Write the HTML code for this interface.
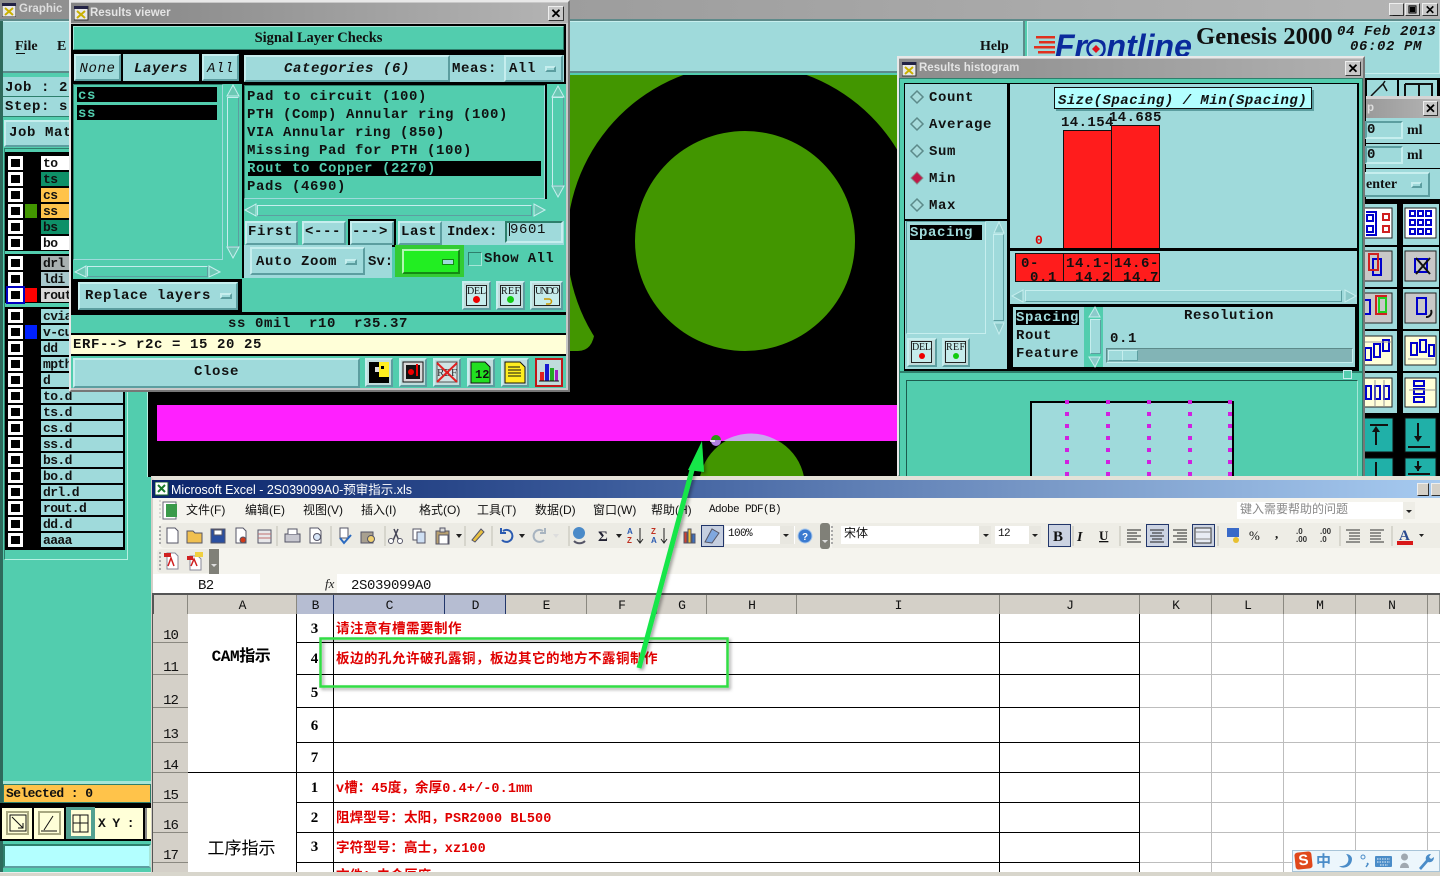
<!DOCTYPE html>
<html><head><meta charset="utf-8"><style>
html,body{margin:0;padding:0;width:1440px;height:876px;overflow:hidden;background:#52cdae}
div,span,svg{position:absolute;box-sizing:border-box;display:block}
.m{font:bold 14px/16px "Liberation Mono",monospace;letter-spacing:.6px;color:#111;white-space:pre}
.sm{font-size:13px;letter-spacing:-.6px}
.s{font:bold 14px/18px "Liberation Serif",serif;color:#111;white-space:pre}
.it{font-style:italic}
.c{text-align:center}
.b{background:#9fdadb;border:2px solid;border-color:#c6eeee #5c9ea0 #5c9ea0 #c6eeee}
.t{background:#52cdae;border:1px solid;border-color:#2e7f6c #a6e6d8 #a6e6d8 #2e7f6c}
.k{background:#000}
.l{background:#9fdadb}
.ti{font:bold 11.5px/16px "Liberation Sans",sans-serif;color:#e4e4e4;white-space:pre}
.x{background:#c8c8c8;border:1px solid;border-color:#eee #333 #333 #eee;font:bold 13px/12px "Liberation Sans",sans-serif;text-align:center;color:#000}
.r{left:5px;width:120px;height:16px;background:#000}
.r i{position:absolute;box-sizing:border-box;left:3px;top:1px;width:15px;height:14px;border:3px solid #fff;background:#000}
.r u{position:absolute;left:20px;top:1px;width:12px;height:14px}
.r b{position:absolute;box-sizing:border-box;left:36px;top:1px;width:82px;height:14px;background:#9fdadb;font:bold 13px/15px "Liberation Mono",monospace;letter-spacing:-.6px;padding-left:2px;color:#111;overflow:hidden}
.z{font:12px/16px "Liberation Mono","Noto Sans CJK SC",monospace;letter-spacing:-.6px;color:#111;white-space:pre}
.cj{font:12px/16px "Liberation Sans","Noto Sans CJK SC",sans-serif;color:#111;white-space:pre}
.rd{font:bold 13.5px/18px "Liberation Mono","Noto Sans CJK SC",sans-serif;color:#e00000;white-space:pre;letter-spacing:.1px}
.h{top:595px;height:19px;background:#d4d0c8;border-right:1px solid #8a8880;font:13px/21px "Liberation Mono",monospace;text-align:center;color:#111;letter-spacing:-1px}
.n{left:153px;width:35px;background:#d4d0c8;border-bottom:1px solid #8a8880;font:14px/16px "Liberation Mono",monospace;text-align:center;color:#111;letter-spacing:-1px}
.hl{left:297px;width:842px;height:1px;background:#000}
.num{left:297px;width:35px;font:bold 15px/18px "Liberation Serif",serif;text-align:center;color:#000}
.ic{background:#c0dcdc;border:2px solid;border-color:#c6eeee #5c9ea0 #5c9ea0 #c6eeee}
</style></head><body>

<!-- top title bar -->
<div style="left:0;top:0;width:1440px;height:19px;background:linear-gradient(90deg,#8e8e8e,#b4b4b4)"></div>
<div style="left:0;top:19px;width:1440px;height:2px;background:#5e8a8a"></div>
<div class="ti" style="left:19px;top:1px;color:#ddd">Graphic</div>
<div class="x" style="left:1389px;top:3px;width:15px;height:13px">_</div>
<div class="x" style="left:1405px;top:3px;width:15px;height:13px;font-size:10px">&#9635;</div>
<div class="x" style="left:1422px;top:3px;width:16px;height:13px;font-size:12px">&#10005;</div>
<svg style="left:2px;top:3px" width="14" height="14"><rect width="14" height="14" fill="#e8e8e8" stroke="#333"/><rect width="14" height="3" fill="#224"/><path d="M3 5l8 7M11 5l-8 7" stroke="#c9b000" stroke-width="2"/></svg>

<!-- top panels -->
<div class="l" style="left:2px;top:21px;width:1022px;height:52px;border:1px solid #c6eeee;border-bottom:2px solid #5c8a8a"></div>
<div class="s" style="left:15px;top:38px">File</div>
<div style="left:16px;top:53px;width:9px;height:1px;background:#111"></div>
<div class="s" style="left:57px;top:38px">E</div>
<div class="s" style="left:980px;top:38px">Help</div>
<div style="left:1023px;top:21px;width:2px;height:54px;background:#5c8a8a"></div>
<div class="l" style="left:1027px;top:21px;width:413px;height:53px;border:1px solid #c6eeee"></div>
<div style="left:1030px;top:28px;width:170px;height:28px;overflow:hidden">
  <svg style="left:4px;top:5px" width="22" height="23"><path d="M2 3h19v2.5h-19zM5 8h16v2.5h-16zM0 13h21v2.5h-21zM4 18h17v2.5h-17z" fill="#e0301e"/></svg>
  <div style="left:25px;top:0;font:italic bold 32px/36px 'Liberation Sans',sans-serif;color:#0a2a9c;white-space:pre">Frontline</div>
  <svg style="left:56px;top:11px" width="20" height="20"><circle cx="10" cy="10" r="8.5" fill="#9fdadb" stroke="#0a2a9c" stroke-width="2.5"/><path d="M10 6l4 4-4 4-4-4z" fill="#e0101e"/></svg>
</div>
<div style="left:1196px;top:21px;font:bold 24px/32px 'Liberation Serif',serif;color:#111;white-space:pre;transform:scaleX(1.03);transform-origin:0 0">Genesis 2000</div>
<div class="m it" style="left:1337px;top:24px">04 Feb 2013</div>
<div class="m it" style="left:1350px;top:39px">06:02 PM</div>

<!-- canvas -->
<svg style="left:148px;top:75px" width="760" height="402" viewBox="148 75 760 402">
 <rect x="148" y="75" width="760" height="402" fill="#000"/>
 <path d="M500 75H900V165H595V330Q593 351 578 351H500Z" fill="#429600"/>
 <circle cx="745" cy="242" r="178" fill="#000"/>
 <circle cx="745" cy="241" r="110" fill="#429600"/>
 <circle cx="752" cy="487" r="53" fill="#429600"/>
 <rect x="157" y="405" width="745" height="36" fill="#ff20ff"/>
 <path d="M723 441Q752 426 778 441Z" fill="#c8a8ee"/>
 <circle cx="716" cy="441" r="5" fill="#b080e0"/>
 <path d="M711 440a5 5 0 0 1 10 0z" fill="#2a9a10"/>
 <path d="M710 441h5" stroke="#fff" stroke-width="1.5"/>
</svg>
<div style="left:147px;top:75px;width:1px;height:402px;background:#b8f0e4"></div>

<!-- left column -->
<div style="left:0;top:21px;width:3px;height:855px;background:#2e6a5c"></div>
<div class="l" style="left:3px;top:77px;width:140px;height:20px;border-bottom:1px solid #2e7f6c"></div>
<div class="l" style="left:3px;top:97px;width:140px;height:20px;border-bottom:1px solid #2e7f6c"></div>
<div class="m" style="left:5px;top:80px">Job : 2</div>
<div class="m" style="left:5px;top:99px">Step: s</div>
<div class="b" style="left:4px;top:120px;width:140px;height:27px"></div>
<div class="m" style="left:9px;top:125px">Job Mat</div>
<div style="left:4px;top:148px;width:124px;height:412px;border:1px solid;border-color:#2e7f6c #b6f0e2 #b6f0e2 #2e7f6c"></div>
<div class="k" style="left:5px;top:152px;width:120px;height:398px"></div>
<div style="left:5px;top:250px;width:120px;height:4px;background:#52cdae"></div>
<div style="left:5px;top:303px;width:120px;height:4px;background:#52cdae"></div>
<div class="r" style="top:155px"><i></i><b style="background:#fff">to</b></div>
<div class="r" style="top:171px"><i></i><b style="background:#0e9068">ts</b></div>
<div class="r" style="top:187px"><i></i><b style="background:#ffc34a">cs</b></div>
<div class="r" style="top:203px"><i></i><u style="background:#429600"></u><b style="background:#ffc34a">ss</b></div>
<div class="r" style="top:219px"><i></i><b style="background:#0e9068">bs</b></div>
<div class="r" style="top:235px"><i></i><b style="background:#fff">bo</b></div>
<div class="r" style="top:255px"><i></i><b style="background:#a8b0b0">drl</b></div>
<div class="r" style="top:271px"><i></i><b style="background:#a8c8cc">ldi</b></div>
<div class="r" style="top:287px"><i style="outline:2px solid #0000c0"></i><u style="background:#ff0000"></u><b style="background:#d8d8d8">rout</b></div>
<div class="r" style="top:308px"><i></i><b>cvia</b></div>
<div class="r" style="top:324px"><i></i><u style="background:#0020ff"></u><b>v-cu</b></div>
<div class="r" style="top:340px"><i></i><b>dd</b></div>
<div class="r" style="top:356px"><i></i><b>mpth</b></div>
<div class="r" style="top:372px"><i></i><b>d</b></div>
<div class="r" style="top:388px"><i></i><b>to.d</b></div>
<div class="r" style="top:404px"><i></i><b>ts.d</b></div>
<div class="r" style="top:420px"><i></i><b>cs.d</b></div>
<div class="r" style="top:436px"><i></i><b>ss.d</b></div>
<div class="r" style="top:452px"><i></i><b>bs.d</b></div>
<div class="r" style="top:468px"><i></i><b>bo.d</b></div>
<div class="r" style="top:484px"><i></i><b>drl.d</b></div>
<div class="r" style="top:500px"><i></i><b>rout.d</b></div>
<div class="r" style="top:516px"><i></i><b>dd.d</b></div>
<div class="r" style="top:532px"><i></i><b>aaaa</b></div>
<div style="left:3px;top:781px;width:148px;height:3px;background:#a6e6d8"></div>
<div style="left:3px;top:784px;width:148px;height:19px;background:#ffc34a;border:1px solid #2e7f6c"></div>
<div class="m sm" style="left:6px;top:786px">Selected : 0</div>
<div class="k" style="left:0;top:803px;width:151px;height:38px"></div>
<div style="left:2px;top:808px;width:30px;height:31px;background:#ffffd8"></div>
<div style="left:34px;top:808px;width:30px;height:31px;background:#ffffd8"></div>
<div style="left:66px;top:807px;width:29px;height:32px;background:#52a090"></div>
<div style="left:71px;top:810px;width:20px;height:26px;background:#ffffd8"></div>
<div style="left:95px;top:808px;width:48px;height:31px;background:#ffffd8"></div>
<div style="left:145px;top:808px;width:6px;height:31px;background:#ffffd8;border-left:2px solid #888"></div>
<svg style="left:0;top:805px" width="100" height="35"><g fill="none" stroke="#111"><rect x="7" y="7" width="21" height="22" stroke="#a8a880" stroke-width="2"/><rect x="10" y="10" width="16" height="16"/><path d="M12 12l11 11M23 18v5h-5"/><rect x="39" y="7" width="21" height="22" stroke="#a8a880" stroke-width="2"/><path d="M41 26h16M44 25l9-14"/><rect x="73" y="10" width="15" height="17"/><path d="M80 10v17M73 18h15"/></g></svg>
<div class="m sm" style="left:98px;top:816px">X Y :</div>
<div style="left:3px;top:844px;width:148px;height:24px;background:#b3ffff;border:2px solid;border-color:#2e7f6c #a6e6d8 #5c9ea0 #2e7f6c"></div>

<!-- results viewer -->
<div style="left:69px;top:0;width:501px;height:392px;background:#c8c8c8;border:2px solid;border-color:#e8e8e8 #777 #777 #e8e8e8"></div>
<div style="left:71px;top:3px;width:497px;height:20px;background:linear-gradient(90deg,#848484,#b4b4b4)"></div>
<svg style="left:74px;top:6px" width="15" height="15"><rect width="14" height="14" fill="#e8e8e8" stroke="#333"/><rect width="14" height="3" fill="#224"/><path d="M3 5l8 7M11 5l-8 7" stroke="#c9b000" stroke-width="2"/></svg>
<div class="ti" style="left:90px;top:5px">Results viewer</div>
<div class="x" style="left:548px;top:6px;width:16px;height:15px;font-size:13px;line-height:13px">&#10005;</div>
<div class="k" style="left:71px;top:24px;width:495px;height:364px"></div>
<div class="t" style="left:73px;top:26px;width:491px;height:24px;border-color:#a6e6d8 #2e7f6c #2e7f6c #a6e6d8"></div>
<div class="s c" style="left:73px;top:29px;width:491px;font-size:14.5px">Signal Layer Checks</div>
<div class="b" style="left:74px;top:54px;width:47px;height:27px"></div>
<div class="m it c" style="left:74px;top:61px;width:47px;font-weight:normal">None</div>
<div class="l" style="left:123px;top:54px;width:76px;height:27px"></div>
<div class="m it c" style="left:123px;top:61px;width:76px">Layers</div>
<div class="b" style="left:202px;top:54px;width:37px;height:27px"></div>
<div class="m it c" style="left:202px;top:61px;width:37px;font-weight:normal">All</div>
<div class="b" style="left:244px;top:55px;width:206px;height:27px"></div>
<div class="m it c" style="left:244px;top:61px;width:206px">Categories (6)</div>
<div class="l" style="left:450px;top:55px;width:114px;height:27px"></div>
<div class="m" style="left:452px;top:61px">Meas:</div>
<div class="b" style="left:504px;top:55px;width:59px;height:27px"></div>
<div class="m" style="left:509px;top:61px">All</div>
<div class="b" style="left:545px;top:66px;width:11px;height:6px"></div>

<div style="left:73px;top:84px;width:165px;height:192px;background:#52cdae"></div>
<div style="left:73px;top:84px;width:150px;height:176px;background:#52cdae;border:1px solid;border-color:#2e7f6c #9fdadb #9fdadb #2e7f6c"></div>
<div class="k" style="left:77px;top:87px;width:140px;height:15px"></div>
<div class="k" style="left:77px;top:105px;width:140px;height:15px"></div>
<div class="m" style="left:78px;top:88px;color:#52cdae">cs</div>
<div class="m" style="left:78px;top:106px;color:#52cdae">ss</div>

<div class="t" style="left:244px;top:85px;width:301px;height:114px;border-color:#2e7f6c #9fdadb #9fdadb #2e7f6c"></div>
<div class="m" style="left:247px;top:89px">Pad to circuit (100)</div>
<div class="m" style="left:247px;top:107px">PTH (Comp) Annular ring (100)</div>
<div class="m" style="left:247px;top:125px">VIA Annular ring (850)</div>
<div class="m" style="left:247px;top:143px">Missing Pad for PTH (100)</div>
<div class="k" style="left:248px;top:161px;width:293px;height:15px"></div>
<div class="m" style="left:247px;top:161px;color:#52cdae">Rout to Copper (2270)</div>
<div class="m" style="left:247px;top:179px">Pads (4690)</div>

<div style="left:244px;top:199px;width:322px;height:20px;background:#52cdae"></div>
<div style="left:547px;top:84px;width:19px;height:116px;background:#52cdae"></div>
<div style="left:224px;top:84px;width:18px;height:178px;background:#52cdae"></div>
<div style="left:73px;top:261px;width:169px;height:18px;background:#52cdae"></div>
<!-- scrollbars -->
<div class="b" style="left:227px;top:97px;width:12px;height:150px;background:#52cdae;border-width:1px"></div>
<div class="b" style="left:552px;top:97px;width:12px;height:89px;background:#52cdae;border-width:1px"></div>
<div class="b" style="left:87px;top:266px;width:121px;height:11px;background:#52cdae;border-width:1px"></div>
<div class="b" style="left:257px;top:205px;width:275px;height:11px;background:#52cdae;border-width:1px"></div>
<svg style="left:70px;top:80px" width="500" height="200" viewBox="70 80 500 200"><g fill="#6cc8b4" stroke="#c6eeee"><path d="M233 85l6 11h-12zM233 258l6-11h-12zM558 86l6 11h-12zM558 197l6-11h-12zM75 272l11-6v11zM220 272l-11-6v11zM245 210l11-6v12zM545 210l-11-6v12z"/></g></svg>

<div class="k" style="left:73px;top:279px;width:168px;height:35px"></div>
<div class="b" style="left:78px;top:282px;width:160px;height:28px"></div>
<div class="m" style="left:85px;top:288px">Replace layers</div>
<div class="b" style="left:220px;top:293px;width:12px;height:6px"></div>

<div style="left:244px;top:218px;width:322px;height:96px;background:#52cdae"></div>
<div class="b" style="left:245px;top:221px;width:53px;height:24px"></div>
<div class="m" style="left:248px;top:224px">First</div>
<div class="b" style="left:302px;top:221px;width:44px;height:24px"></div>
<div class="m" style="left:305px;top:224px">&lt;---</div>
<div class="k" style="left:348px;top:219px;width:48px;height:28px"></div>
<div class="b" style="left:350px;top:221px;width:44px;height:24px"></div>
<div class="m" style="left:352px;top:224px">---&gt;</div>
<div class="b" style="left:398px;top:221px;width:44px;height:24px"></div>
<div class="m" style="left:401px;top:224px">Last</div>
<div class="l" style="left:442px;top:221px;width:122px;height:24px"></div>
<div class="m" style="left:447px;top:224px;letter-spacing:0">Index:</div>
<div class="l" style="left:505px;top:221px;width:58px;height:22px;border:2px solid;border-color:#2e7f6c #c6eeee #c6eeee #2e7f6c"></div>
<div class="m" style="left:510px;top:222px;font-weight:normal">9601</div>
<div style="left:509px;top:223px;width:1px;height:13px;background:#111"></div>
<div class="l" style="left:244px;top:245px;width:148px;height:33px"></div>
<div class="b" style="left:250px;top:247px;width:115px;height:28px"></div>
<div class="m" style="left:256px;top:254px">Auto Zoom</div>
<div class="b" style="left:345px;top:259px;width:12px;height:6px"></div>
<div class="m" style="left:368px;top:254px;letter-spacing:0">Sv:</div>
<div style="left:395px;top:245px;width:69px;height:32px;background:#33cc33"></div>
<div style="left:402px;top:249px;width:58px;height:25px;background:#22ee22;border:2px solid;border-color:#b0f8b0 #148a14 #148a14 #b0f8b0"></div>
<div style="left:442px;top:259px;width:12px;height:6px;background:#9fdadb;border:1px solid #148a14"></div>
<div style="left:468px;top:252px;width:14px;height:14px;background:#52cdae;border:1px solid;border-color:#2e7f6c #a6e6d8 #a6e6d8 #2e7f6c"></div>
<div class="m" style="left:484px;top:251px;letter-spacing:.35px">Show All</div>
<div style="left:242px;top:278px;width:324px;height:36px;background:#52cdae"></div>
<div class="ic" style="left:462px;top:281px;width:29px;height:29px"></div>
<div class="ic" style="left:496px;top:281px;width:29px;height:29px"></div>
<div class="ic" style="left:530px;top:281px;width:33px;height:29px"></div>
<svg style="left:462px;top:281px" width="104" height="30" font-family="Liberation Serif" font-size="10" fill="#111">
 <rect x="4.500" y="4.500" width="20" height="20" fill="#c6ecec" stroke="#222"/><text x="5" y="13" textLength="19">DEL</text><circle cx="14.500" cy="18.500" r="3.500" fill="#e00"/>
 <rect x="38.500" y="4.500" width="20" height="20" fill="#c6ecec" stroke="#222"/><text x="39" y="13" textLength="19">REF</text><circle cx="48.500" cy="18.500" r="3.500" fill="#1c1"/>
 <rect x="72.500" y="4.500" width="25" height="20" fill="#c6ecec" stroke="#222"/><text x="73" y="13" textLength="24">UNDO</text><path d="M82 18h5a2.500 2.500 0 0 1 0 5h-3" fill="none" stroke="#c90" stroke-width="1.500"/>
</svg>
<div class="k" style="left:71px;top:312px;width:495px;height:3px"></div>
<div style="left:71px;top:315px;width:495px;height:19px;background:#52cdae"></div>
<div class="m" style="left:228px;top:316px">ss 0mil  r10  r35.37</div>
<div class="k" style="left:71px;top:333px;width:495px;height:2px"></div>
<div style="left:71px;top:335px;width:495px;height:19px;background:#ffffd8"></div>
<div class="m" style="left:73px;top:337px">ERF--&gt; r2c = 15 20 25</div>
<div class="k" style="left:71px;top:354px;width:495px;height:2px"></div>
<div style="left:71px;top:356px;width:495px;height:32px;background:#52cdae"></div>
<div class="b" style="left:73px;top:358px;width:287px;height:30px"></div>
<div class="m c" style="left:73px;top:364px;width:287px">Close</div>
<div class="ic" style="left:365px;top:358px;width:28px;height:29px"></div>
<div class="ic" style="left:399px;top:358px;width:28px;height:29px"></div>
<div class="ic" style="left:433px;top:358px;width:28px;height:29px"></div>
<div class="ic" style="left:467px;top:358px;width:28px;height:29px"></div>
<div class="ic" style="left:501px;top:358px;width:28px;height:29px"></div>
<div style="left:535px;top:358px;width:28px;height:29px;background:#c0dcdc;border:2px solid #c01818"></div>
<svg style="left:365px;top:358px" width="200" height="30" viewBox="365 358 200 30">
 <rect x="369" y="362" width="20" height="21" fill="#000"/><rect x="379" y="362" width="10" height="15" fill="#ffee20"/><rect x="375" y="367" width="4" height="5" fill="#ddd"/><rect x="381" y="366" width="3" height="3" fill="#000"/>
 <rect x="403" y="362" width="20" height="20" fill="#d8d8d8" stroke="#111"/><rect x="406" y="365" width="14" height="14" fill="#111"/><circle cx="411" cy="372" r="3" fill="#e00"/><path d="M417 364v12" stroke="#e00" stroke-width="2"/>
 <rect x="437" y="362" width="20" height="20" fill="#d0e4e4" stroke="#555"/><text x="437" y="376" font-family="Liberation Serif" font-size="11" textLength="20" fill="#333">REF</text><path d="M437 363l20 19M457 363l-20 19" stroke="#e02020" stroke-width="2"/>
 <path d="M471 362h14l5 5v16h-19z" fill="#22e020" stroke="#111"/><text x="475" y="378" font-family="Liberation Mono" font-weight="bold" font-size="12" fill="#111">12</text>
 <path d="M505 362h15l5 5v16h-20z" fill="#ffee20" stroke="#111"/><path d="M508 367h12M508 370h13M508 373h13M508 376h13" stroke="#111"/>
 <rect x="538" y="361" width="22" height="23" fill="#c0dcdc"/><rect x="540" y="372" width="4" height="9" fill="#e02020"/><rect x="545" y="364" width="4" height="17" fill="#1818d0"/><rect x="550" y="368" width="4" height="13" fill="#22aa22"/><rect x="555" y="370" width="3" height="11" fill="#a020c0"/><path d="M539 381h20" stroke="#111"/>
</svg>

<!-- right stub -->
<div class="l" style="left:1365px;top:74px;width:75px;height:402px"></div>
<div class="k" style="left:1364px;top:78px;width:76px;height:398px"></div>
<div class="l" style="left:1367px;top:80px;width:30px;height:16px"></div>
<div class="l" style="left:1399px;top:80px;width:38px;height:16px"></div>
<svg style="left:1367px;top:80px" width="72" height="16" fill="none" stroke="#111"><path d="M4 16l12-12 4 7M16 4l2-3" stroke-width="1.500"/><path d="M38 4h27v12M38 4v12M52 4v12" stroke-width="2"/></svg>
<div style="left:1366px;top:96px;width:74px;height:3px;background:#d4d4d4"></div>
<div style="left:1366px;top:99px;width:74px;height:19px;background:linear-gradient(90deg,#9a9a9a,#b4b4b4)"></div>
<div class="x" style="left:1423px;top:101px;width:15px;height:15px;line-height:13px">&#10005;</div>
<div class="ti" style="left:1367px;top:100px;color:#ddd">p</div>
<div style="left:1366px;top:118px;width:74px;height:88px;background:#9fdadb"></div>
<div class="k" style="left:1366px;top:143px;width:74px;height:1px"></div>
<div class="k" style="left:1366px;top:168px;width:74px;height:1px"></div>
<div class="k" style="left:1366px;top:199px;width:74px;height:2px"></div>
<div style="left:1365px;top:121px;width:38px;height:18px;border:2px solid;border-color:#5c9ea0 #c6eeee #c6eeee #5c9ea0"></div>
<div style="left:1365px;top:146px;width:38px;height:18px;border:2px solid;border-color:#5c9ea0 #c6eeee #c6eeee #5c9ea0"></div>
<div class="m" style="left:1367px;top:122px">0</div>
<div class="m" style="left:1367px;top:147px">0</div>
<div class="s" style="left:1407px;top:122px">ml</div>
<div class="s" style="left:1407px;top:147px">ml</div>
<div class="b" style="left:1362px;top:172px;width:68px;height:25px"></div>
<div class="s" style="left:1366px;top:176px">enter</div>
<div class="b" style="left:1411px;top:182px;width:11px;height:6px"></div>
<div class="k" style="left:1364px;top:201px;width:76px;height:275px"></div>
<svg style="left:1365px;top:204px" width="75" height="272" viewBox="1365 204 75 272">
 <g fill="#9fdadb"><rect x="1361" y="204" width="36" height="41"/><rect x="1403" y="204" width="36" height="41"/><rect x="1361" y="247" width="36" height="40"/><rect x="1403" y="247" width="36" height="40"/><rect x="1361" y="289" width="36" height="40"/><rect x="1403" y="289" width="36" height="40"/><rect x="1361" y="331" width="36" height="40"/><rect x="1403" y="331" width="36" height="40"/><rect x="1361" y="373" width="36" height="40"/><rect x="1403" y="373" width="36" height="40"/></g>
 <g fill="#fff" stroke="#222"><rect x="1361" y="208" width="31" height="30"/><rect x="1405" y="208" width="31" height="30"/></g>
 <g fill="#c8c8c8" stroke="#222"><rect x="1361" y="251" width="31" height="30"/><rect x="1405" y="251" width="31" height="30"/><rect x="1361" y="293" width="31" height="30"/><rect x="1405" y="293" width="31" height="30"/></g>
 <g fill="#ffffd8" stroke="#222"><rect x="1361" y="336" width="31" height="29"/><rect x="1405" y="336" width="31" height="29"/><rect x="1361" y="378" width="31" height="29"/><rect x="1405" y="378" width="31" height="29"/></g>
 <g fill="none" stroke="#00c" stroke-width="2">
  <rect x="1367" y="215" width="6" height="6"/><rect x="1367" y="226" width="6" height="6"/><path d="M1366 212h10v23h-10"/>
  <rect x="1410" y="211" width="5" height="5"/><rect x="1418" y="211" width="5" height="5"/><rect x="1426" y="211" width="5" height="5"/><rect x="1410" y="220" width="5" height="5"/><rect x="1418" y="220" width="5" height="5"/><rect x="1426" y="220" width="5" height="5"/><rect x="1410" y="229" width="5" height="5"/><rect x="1418" y="229" width="5" height="5"/><rect x="1426" y="229" width="5" height="5"/>
  <rect x="1373" y="259" width="8" height="16"/><rect x="1415" y="259" width="12" height="13"/><path d="M1416 258l14 16M1430 258l-14 16" stroke="#111"/>
  <rect x="1417" y="298" width="9" height="16"/>
  <rect x="1364" y="300" width="6" height="14"/>
  <rect x="1365" y="348" width="6" height="12"/><rect x="1374" y="344" width="6" height="13"/><rect x="1383" y="340" width="6" height="11"/>
  <rect x="1411" y="343" width="6" height="12"/><rect x="1420" y="340" width="6" height="12"/><rect x="1429" y="345" width="5" height="11"/>
  <rect x="1366" y="386" width="5" height="13"/><rect x="1375" y="386" width="5" height="13"/><rect x="1384" y="386" width="5" height="13"/>
  <rect x="1414" y="381" width="10" height="5"/><rect x="1414" y="389" width="10" height="5"/><rect x="1414" y="397" width="10" height="5"/>
 </g>
 <g fill="none" stroke-width="2"><rect x="1369" y="254" width="9" height="16" stroke="#d02020"/><rect x="1376" y="296" width="10" height="18" stroke="#d02020"/><rect x="1379" y="298" width="7" height="14" stroke="#22cc22"/><path d="M1431 310a5 5 0 0 1-5 7" stroke="#111"/></g>
 <g fill="none" stroke="#d02020" stroke-width="2"><rect x="1383" y="214" width="6" height="6"/><rect x="1383" y="226" width="6" height="6"/></g>
 <path d="M1364 342h27M1408 359h26M1375 380v26M1384 380v26M1409 390h26" stroke="#999"/>
 <g fill="#20b0a8" stroke="#111"><rect x="1362" y="418" width="31" height="34"/><rect x="1405" y="418" width="31" height="34"/><rect x="1362" y="458" width="31" height="20"/><rect x="1405" y="458" width="31" height="20"/></g>
 <path d="M1376 445v-17M1370 425h18M1418 423v17M1408 447h22M1418 461v10M1408 474h22M1376 462v14" stroke="#111" stroke-width="2"/>
 <path d="M1372 432l4-6 4 6zM1414 436l4 6 4-6zM1414 466l4 5 4-5z" fill="#111"/>
</svg>

<!-- histogram window -->
<div style="left:897px;top:56px;width:468px;height:421px;background:#c8c8c8;border:2px solid;border-color:#e8e8e8 #777 #777 #e8e8e8"></div>
<div style="left:899px;top:59px;width:464px;height:19px;background:linear-gradient(90deg,#8c8c8c,#b0b0b0)"></div>
<svg style="left:902px;top:62px" width="15" height="15"><rect width="14" height="14" fill="#e8e8e8" stroke="#333"/><rect width="14" height="3" fill="#224"/><path d="M3 5l8 7M11 5l-8 7" stroke="#c9b000" stroke-width="2"/></svg>
<div class="ti" style="left:919px;top:60px">Results histogram</div>
<div class="x" style="left:1345px;top:61px;width:16px;height:15px;line-height:13px">&#10005;</div>
<div style="left:899px;top:78px;width:464px;height:399px;background:#52cdae;border:1px solid #2e7f6c"></div>
<div class="k" style="left:904px;top:83px;width:104px;height:288px"></div>
<div class="l" style="left:905px;top:84px;width:102px;height:135px"></div>
<div class="l" style="left:905px;top:221px;width:102px;height:148px"></div>
<svg style="left:905px;top:84px" width="30" height="135"><g fill="#a8dcdc" stroke="#5c8a8a" stroke-width="1.500"><path d="M12 7l6 6-6 6-6-6zM12 34l6 6-6 6-6-6zM12 61l6 6-6 6-6-6zM12 115l6 6-6 6-6-6z"/></g><path d="M12 88l6 6-6 6-6-6z" fill="#c01848" stroke="#888"/></svg>
<div class="m" style="left:929px;top:90px">Count</div>
<div class="m" style="left:929px;top:117px">Average</div>
<div class="m" style="left:929px;top:144px">Sum</div>
<div class="m" style="left:929px;top:171px">Min</div>
<div class="m" style="left:929px;top:198px">Max</div>
<div style="left:906px;top:221px;width:80px;height:113px;border:1px solid;border-color:#5c9ea0 #c6eeee #c6eeee #5c9ea0"></div>
<div class="k" style="left:910px;top:225px;width:72px;height:15px"></div>
<div class="m" style="left:910px;top:225px;color:#9fdadb">Spacing</div>
<div class="b" style="left:993px;top:234px;width:11px;height:87px;border-width:1px"></div>
<svg style="left:990px;top:220px" width="18" height="116"><g fill="#8ccaca" stroke="#c6eeee"><path d="M9 2l5 11h-10zM9 114l5-11h-10z"/></g></svg>
<div class="ic" style="left:907px;top:338px;width:30px;height:29px"></div>
<div class="ic" style="left:942px;top:338px;width:28px;height:29px"></div>
<svg style="left:907px;top:338px" width="70" height="30" font-family="Liberation Serif" font-size="10" fill="#111">
 <rect x="4.500" y="3.500" width="20" height="21" fill="#c6ecec" stroke="#222"/><text x="5" y="12" textLength="19">DEL</text><circle cx="15" cy="18" r="3" fill="#e00"/>
 <rect x="38.500" y="3.500" width="20" height="21" fill="#c6ecec" stroke="#222"/><text x="39" y="12" textLength="19">REF</text><circle cx="49" cy="18" r="3" fill="#1c1"/>
</svg>
<div class="k" style="left:1008px;top:83px;width:351px;height:288px"></div>
<div class="l" style="left:1010px;top:84px;width:347px;height:164px"></div>
<div style="left:1056px;top:90px;width:258px;height:21px;background:#5c9ea0"></div>
<div style="left:1054px;top:87px;width:258px;height:22px;background:#b3ffff;border:1px solid #111"></div>
<div class="m it" style="left:1058px;top:93px;letter-spacing:.5px">Size(Spacing) / Min(Spacing)</div>
<div class="m" style="left:1061px;top:115px;letter-spacing:.4px">14.154</div>
<div style="left:1063px;top:130px;width:49px;height:119px;background:#ff1c1c;border:1px solid #111"></div>
<div style="left:1111px;top:125px;width:49px;height:124px;background:#ff1c1c;border:1px solid #111"></div>
<div class="m" style="left:1109px;top:110px;letter-spacing:.4px">14.685</div>
<div class="m sm" style="left:1035px;top:233px;color:#d00">0</div>
<div class="k" style="left:1010px;top:248px;width:347px;height:3px"></div>
<div class="l" style="left:1010px;top:251px;width:347px;height:53px"></div>
<div style="left:1015px;top:253px;width:49px;height:29px;background:#ff1c1c;border:1px solid #111;overflow:hidden"><div class="m" style="left:5px;top:2px">0-</div><div class="m" style="left:14px;top:16px">0.1</div></div>
<div style="left:1063px;top:253px;width:49px;height:29px;background:#ff1c1c;border:1px solid #111;overflow:hidden"><div class="m" style="left:2px;top:2px">14.1-</div><div class="m" style="left:11px;top:16px">14.2</div></div>
<div style="left:1111px;top:253px;width:49px;height:29px;background:#ff1c1c;border:1px solid #111;overflow:hidden"><div class="m" style="left:2px;top:2px">14.6-</div><div class="m" style="left:11px;top:16px">14.7</div></div>
<div class="b" style="left:1025px;top:290px;width:317px;height:12px;border-width:1px"></div>
<svg style="left:1010px;top:288px" width="350" height="16"><g fill="#8ccaca" stroke="#c6eeee"><path d="M2 8l11-6v12zM346 8l-11-6v12z"/></g></svg>
<div class="k" style="left:1010px;top:304px;width:348px;height:66px"></div>
<div class="l" style="left:1013px;top:307px;width:342px;height:60px"></div>
<div class="k" style="left:1016px;top:310px;width:63px;height:15px"></div>
<div class="m" style="left:1016px;top:310px;color:#9fdadb">Spacing</div>
<div class="m" style="left:1016px;top:328px">Rout</div>
<div class="m" style="left:1016px;top:346px">Feature</div>
<div style="left:1084px;top:307px;width:19px;height:60px;background:#52cdae"></div>
<div class="b" style="left:1090px;top:319px;width:11px;height:35px;border-width:1px"></div>
<svg style="left:1085px;top:305px" width="20" height="64"><g fill="#8ccaca" stroke="#c6eeee"><path d="M10 2l5 10h-11zM10 62l5-10h-11z"/></g></svg>
<div class="m c" style="left:1103px;top:308px;width:252px">Resolution</div>
<div class="m" style="left:1110px;top:331px">0.1</div>
<div style="left:1106px;top:348px;width:247px;height:15px;background:#82b4b6;border:1px solid;border-color:#5c8a8a #c6eeee #c6eeee #5c8a8a"></div>
<div class="b" style="left:1108px;top:350px;width:15px;height:11px;border-width:1px"></div>
<div class="b" style="left:1122px;top:350px;width:16px;height:11px;border-width:1px"></div>
<div style="left:899px;top:371px;width:464px;height:2px;background:#2e7f6c"></div>
<div style="left:1343px;top:370px;width:9px;height:9px;background:#52cdae;border:1px solid #c6eeee"></div>
<div style="left:906px;top:380px;width:452px;height:97px;border:1px solid;border-color:#1c5c4e #a6e6d8 #a6e6d8 #1c5c4e"></div>
<div class="l" style="left:1030px;top:401px;width:204px;height:76px;border:2px solid #000;border-bottom:0"></div>
<svg style="left:1060px;top:398px" width="180" height="79"><g fill="#d020e0"><path d="M5 2h4v4h-4zM5 14h4v4h-4zM5 26h4v4h-4zM5 38h4v4h-4zM5 50h4v4h-4zM5 62h4v4h-4zM5 74h4v4h-4zM46 2h4v4h-4zM46 14h4v4h-4zM46 26h4v4h-4zM46 38h4v4h-4zM46 50h4v4h-4zM46 62h4v4h-4zM46 74h4v4h-4zM87 2h4v4h-4zM87 14h4v4h-4zM87 26h4v4h-4zM87 38h4v4h-4zM87 50h4v4h-4zM87 62h4v4h-4zM87 74h4v4h-4zM128 2h4v4h-4zM128 14h4v4h-4zM128 26h4v4h-4zM128 38h4v4h-4zM128 50h4v4h-4zM128 62h4v4h-4zM128 74h4v4h-4zM168 2h4v4h-4zM168 14h4v4h-4zM168 26h4v4h-4zM168 38h4v4h-4zM168 50h4v4h-4zM168 62h4v4h-4zM168 74h4v4h-4z"/></g></svg>

<!-- excel window -->
<div style="left:151px;top:476px;width:1289px;height:400px;background:#ece9d8;border-left:3px solid #d4d0c8;border-top:4px solid #e4e2d8"></div>
<div style="left:152px;top:480px;width:1288px;height:18px;background:linear-gradient(90deg,#0a246a,#3a5a9a 35%,#7a9ac8 70%,#a6caf0)"></div>
<svg style="left:155px;top:482px" width="14" height="14"><rect width="13" height="13" fill="#fff" stroke="#1a6a2a"/><path d="M3 3l7 7M10 3l-7 7" stroke="#1a7a2a" stroke-width="2"/></svg>
<div class="cj" style="left:171px;top:482px;color:#fff;font-size:12.5px">Microsoft Excel - 2S039099A0-预审指示.xls</div>
<div class="x" style="left:1417px;top:483px;width:12px;height:13px;background:#d4d0c8">_</div>
<div class="x" style="left:1431px;top:483px;width:12px;height:13px;background:#d4d0c8"></div>
<div style="left:153px;top:498px;width:1287px;height:76px;background:#f5f4ee"></div>
<div style="left:160px;top:523px;width:669px;height:25px;background:#ecebe4;border-radius:4px"></div>
<div style="left:832px;top:523px;width:608px;height:25px;background:#eeede6"></div>
<div style="left:157px;top:549px;width:62px;height:24px;background:#ecebe4;border-radius:4px"></div>
<div style="left:820px;top:523px;width:10px;height:26px;background:#808078;border-radius:3px"></div>
<div style="left:209px;top:549px;width:10px;height:25px;background:#808078"></div>
<div class="cj" style="left:186px;top:502px">文件(F)</div>
<div class="cj" style="left:245px;top:502px">编辑(E)</div>
<div class="cj" style="left:303px;top:502px">视图(V)</div>
<div class="cj" style="left:361px;top:502px">插入(I)</div>
<div class="cj" style="left:419px;top:502px">格式(O)</div>
<div class="cj" style="left:477px;top:502px">工具(T)</div>
<div class="cj" style="left:535px;top:502px">数据(D)</div>
<div class="cj" style="left:593px;top:502px">窗口(W)</div>
<div class="cj" style="left:651px;top:502px">帮助(H)</div>
<div class="z" style="left:709px;top:502px;font-size:11px">Adobe PDF(B)</div>
<div style="left:1237px;top:502px;width:178px;height:17px;background:#fff"></div>
<div class="cj" style="left:1240px;top:501px;color:#888">键入需要帮助的问题</div>
<div style="left:1403px;top:502px;width:12px;height:17px;background:#eeede6"></div>
<!-- excel toolbars -->
<div style="left:725px;top:526px;width:70px;height:18px;background:#fff"></div>
<div class="z" style="left:728px;top:526px;font-size:11px">100%</div>
<div style="left:780px;top:526px;width:14px;height:18px;background:#e8e7e0"></div>
<div style="left:841px;top:526px;width:150px;height:18px;background:#fff"></div>
<div class="cj" style="left:844px;top:525px">宋体</div>
<div style="left:979px;top:526px;width:12px;height:18px;background:#e8e7e0"></div>
<div style="left:995px;top:526px;width:46px;height:18px;background:#fff"></div>
<div class="z" style="left:998px;top:526px;font-size:11px">12</div>
<div style="left:1029px;top:526px;width:12px;height:18px;background:#e8e7e0"></div>
<div style="left:701px;top:525px;width:23px;height:22px;background:#c6cfe0;border:1px solid #22366a"></div>
<div style="left:1048px;top:524px;width:23px;height:23px;background:#ccd3e2;border:1px solid #22366a"></div>
<div style="left:1146px;top:524px;width:23px;height:23px;background:#ccd3e2;border:1px solid #22366a"></div>
<div style="left:1192px;top:524px;width:23px;height:23px;background:#ccd3e2;border:1px solid #22366a"></div>
<svg style="left:153px;top:498px" width="1287" height="76" viewBox="153 498 1287 76">
 <rect x="163" y="502" width="13" height="17" fill="#fff" stroke="#667"/><path d="M160 500v20" stroke="#bbb" stroke-dasharray="2 2"/><rect x="166" y="504" width="11" height="13" fill="#3a9a4a"/>
 <path d="M160 526v20M832 526v20M160 552v18" stroke="#aaa" stroke-width="2" stroke-dasharray="2 2"/>
 <g stroke-width="1" stroke="#556">
 <path d="M167 528h8l3 3v12h-11z" fill="#fff"/>
 <path d="M187 531h6l2 2h7v10h-15z" fill="#f0c050"/>
 <rect x="211" y="529" width="14" height="14" fill="#2a4fa0"/><rect x="214" y="530" width="8" height="5" fill="#fff"/>
 <path d="M236 528h7l3 3v12h-10z" fill="#fff"/><circle cx="243" cy="540" r="3" fill="#d03a1a"/>
 <rect x="258" y="530" width="13" height="13" fill="#e8e8ea"/><path d="M258 534h13M258 538h13" stroke="#c07070"/>
 <rect x="285" y="534" width="15" height="8" fill="#c8c8d0"/><path d="M288 534v-5h9v5" fill="#fff"/>
 <path d="M310 528h8l3 3v12h-11z" fill="#fff"/><circle cx="317" cy="537" r="3.500" fill="#d8e6f8"/>
 <path d="M340 528h8v10h-8z" fill="#fff"/><path d="M340 538l4 5 7-8" fill="none" stroke="#2a6ac0" stroke-width="2"/>
 <path d="M361 532h12v11h-12z" fill="#a8a090"/><circle cx="371" cy="539" r="3.500" fill="#f0d070"/>
 <path d="M392 543l6-14M400 543l-6-14" fill="none" stroke="#445" stroke-width="1.500"/><circle cx="391" cy="541" r="2.500" fill="#fff"/><circle cx="400" cy="541" r="2.500" fill="#fff"/>
 <rect x="413" y="529" width="8" height="11" fill="#fff"/><rect x="417" y="532" width="8" height="11" fill="#cfe0f4"/>
 <rect x="436" y="531" width="13" height="13" fill="#b8a070"/><rect x="439" y="535" width="9" height="9" fill="#fff"/><rect x="440" y="528" width="5" height="4" fill="#ddd"/>
 <path d="M472 540l9-11 3 3-9 10z" fill="#e8c040"/>
 <rect x="684" y="532" width="3" height="11" fill="#d04030"/><rect x="688" y="529" width="3" height="14" fill="#f0c030"/><rect x="692" y="534" width="3" height="9" fill="#3a70c0"/>
 <path d="M705 542l7-13 7 4-7 10z" fill="#80a8e0"/>
 </g>
 <path d="M503 531a6 6 0 1 1-1 9M501 528v5h5" fill="none" stroke="#2a5ab0" stroke-width="2"/>
 <path d="M543 531a6 6 0 1 0 1 9M545 528v5h-5" fill="none" stroke="#a8b4c0" stroke-width="2"/>
 <circle cx="579" cy="533" r="6" fill="#4a8ac8"/><path d="M574 541c3 3 8 3 11 0" fill="none" stroke="#556" stroke-width="2"/>
 <text x="598" y="541" font-family="Liberation Serif" font-weight="bold" font-size="15" fill="#223">&#931;</text>
 <g font-family="Liberation Sans" font-size="8" font-weight="bold"><text x="627" y="534" fill="#2a5ab0">A</text><text x="627" y="543" fill="#c03020">Z</text><text x="651" y="534" fill="#c03020">Z</text><text x="651" y="543" fill="#2a5ab0">A</text></g>
 <path d="M640 528v14M637 539l3 4 3-4M664 528v14M661 539l3 4 3-4" fill="none" stroke="#222"/>
 <circle cx="805" cy="536" r="7" fill="#3a7ad0" stroke="#a8c8ec"/><text x="802" y="540" font-family="Liberation Sans" font-weight="bold" font-size="10" fill="#fff">?</text>
 <g fill="#222"><path d="M456 534h6l-3 4zM519 534h6l-3 4zM616 534h6l-3 4zM783 534h6l-3 3zM983 534h6l-3 3zM1032 534h6l-3 3zM1419 534h5l-2.500 3zM264 581h9l-4.500 5zM1406 510h6l-3 3z"/><path d="M553 534h6l-3 4zM822 540h6l-3 3zM211 564h6l-3 3z" fill="#ddd"/></g>
 <path d="M277 526v20M331 526v20M385 526v20M465 526v20M492 526v20M569 526v20M1073 526v20M1120 526v20M1218 526v20M1340 526v20M1392 526v20" stroke="#c0bfb4"/>
 <g font-family="Liberation Serif" font-weight="bold" fill="#111"><text x="1053" y="541" font-size="15">B</text><text x="1077" y="541" font-size="14" font-style="italic">I</text><text x="1099" y="540" font-size="13" text-decoration="underline">U</text><text x="1249" y="540" font-size="13" font-weight="normal">%</text><text x="1275" y="538" font-size="13">,</text></g>
 <path d="M1127 530h14M1127 533h10M1127 536h14M1127 539h10M1127 542h14M1150 530h14M1152 533h10M1150 536h14M1152 539h10M1150 542h14M1173 530h14M1177 533h10M1173 536h14M1177 539h10M1173 542h14" stroke="#222"/>
 <rect x="1195" y="528" width="16" height="15" fill="#e8ecf4" stroke="#333"/><path d="M1195 532h16M1195 539h16" stroke="#888"/>
 <rect x="1227" y="528" width="12" height="9" fill="#3a6ac8"/><circle cx="1236" cy="540" r="3" fill="#e8c030"/>
 <g font-family="Liberation Sans" font-weight="bold" font-size="8" fill="#333"><text x="1296" y="534">.0</text><text x="1296" y="542">.00</text><text x="1320" y="534">.00</text><text x="1320" y="542">.0</text></g>
 <path d="M1346 530h14M1349 533h11M1349 536h11M1349 539h11M1346 542h14M1370 530h14M1370 533h11M1370 536h11M1370 539h11M1370 542h14" stroke="#333"/>
 <text x="1399" y="540" font-family="Liberation Serif" font-weight="bold" font-size="15" fill="#2a4a90">A</text><rect x="1397" y="541" width="16" height="4" fill="#d81818"/>
 <path d="M167 553h8l3 3v13h-11z" fill="#fff" stroke="#889"/><path d="M168 566l3-8 3 8" fill="none" stroke="#d02020" stroke-width="1.500"/><rect x="164" y="553" width="7" height="4" fill="#d02020"/>
 <path d="M190 556h8l3 3v11h-11z" fill="#fff" stroke="#889"/><path d="M191 566l3-7 3 7" fill="none" stroke="#d02020" stroke-width="1.500"/><rect x="187" y="556" width="6" height="4" fill="#d02020"/><rect x="195" y="552" width="8" height="5" fill="#f0d040"/>
</svg>
<!-- formula -->
<div style="left:153px;top:574px;width:1287px;height:20px;background:#fff"></div>
<div style="left:260px;top:574px;width:77px;height:20px;background:#f5f4ee"></div>
<div class="z" style="left:198px;top:578px;font-size:14px">B2</div>
<div style="left:325px;top:577px;font:italic 13px/14px 'Liberation Serif',serif;color:#222">fx</div>
<div class="z" style="left:351px;top:578px;font-size:14px;letter-spacing:-.4px">2S039099A0</div>
<!-- grid -->
<div style="left:152px;top:593px;width:1288px;height:279px;background:#fff;border-top:2px solid #555;border-left:2px solid #555;overflow:hidden"></div>
<div style="left:154px;top:595px;width:1286px;height:19px;background:#d4d0c8;border-bottom:1px solid #8a8880"></div>
<div class="h" style="left:154px;width:34px"></div>
<div class="h" style="left:188px;width:109px">A</div>
<div class="h" style="left:297px;width:37px;background:#b6bdd2;border-color:#22366a">B</div>
<div class="h" style="left:334px;width:111px;background:#b6bdd2;border-color:#22366a">C</div>
<div class="h" style="left:445px;width:61px;background:#b6bdd2;border-color:#22366a">D</div>
<div class="h" style="left:506px;width:81px">E</div>
<div class="h" style="left:587px;width:70px">F</div>
<div class="h" style="left:657px;width:50px">G</div>
<div class="h" style="left:707px;width:90px">H</div>
<div class="h" style="left:797px;width:203px">I</div>
<div class="h" style="left:1000px;width:140px">J</div>
<div class="h" style="left:1140px;width:72px">K</div>
<div class="h" style="left:1212px;width:72px">L</div>
<div class="h" style="left:1284px;width:72px">M</div>
<div class="h" style="left:1356px;width:72px">N</div>
<div class="h" style="left:1428px;width:12px"></div>
<div class="n" style="top:614px;height:29px;padding-top:14px">10</div>
<div class="n" style="top:643px;height:32px;padding-top:17px">11</div>
<div class="n" style="top:675px;height:33px;padding-top:18px">12</div>
<div class="n" style="top:708px;height:35px;padding-top:19px">13</div>
<div class="n" style="top:743px;height:30px;padding-top:15px">14</div>
<div class="n" style="top:773px;height:30px;padding-top:15px">15</div>
<div class="n" style="top:803px;height:30px;padding-top:15px">16</div>
<div class="n" style="top:833px;height:30px;padding-top:15px">17</div>
<div class="n" style="top:863px;height:9px;border:0"></div>
<!-- gray grid -->
<svg style="left:1140px;top:614px" width="300" height="258"><path d="M71.500 0v258M143.500 0v258M215.500 0v258M287.500 0v258M0 28.500h300M0 60.500h300M0 93.500h300M0 128.500h300M0 158.500h300M0 188.500h300M0 218.500h300M0 248.500h300" stroke="#bdbdbd"/></svg>
<div class="hl" style="top:642px"></div>
<div class="hl" style="top:674px"></div>
<div class="hl" style="top:707px"></div>
<div class="hl" style="top:742px"></div>
<div class="hl" style="top:772px;left:188px;width:951px"></div>
<div class="hl" style="top:802px"></div>
<div class="hl" style="top:832px"></div>
<div class="hl" style="top:862px"></div>
<div class="k" style="left:296px;top:614px;width:1px;height:258px"></div>
<div class="k" style="left:333px;top:614px;width:1px;height:258px"></div>
<div class="k" style="left:999px;top:614px;width:1px;height:258px"></div>
<div class="k" style="left:1139px;top:614px;width:1px;height:258px"></div>
<div style="left:188px;top:646px;width:106px;text-align:center;font:bold 16px/22px 'Liberation Mono','Noto Sans CJK SC',sans-serif;color:#000;letter-spacing:-.4px">CAM指示</div>
<div style="left:188px;top:837px;width:107px;text-align:center;font:17px/24px 'Liberation Sans','Noto Sans CJK SC',sans-serif;color:#000">工序指示</div>
<div class="num" style="top:620px">3</div>
<div class="num" style="top:650px">4</div>
<div class="num" style="top:684px">5</div>
<div class="num" style="top:717px">6</div>
<div class="num" style="top:749px">7</div>
<div class="num" style="top:779px">1</div>
<div class="num" style="top:809px">2</div>
<div class="num" style="top:838px">3</div>
<div class="rd" style="left:336px;top:622px;letter-spacing:.5px">请注意有槽需要制作</div>
<div class="rd" style="left:336px;top:652px;letter-spacing:.5px">板边的孔允许破孔露铜，板边其它的地方不露铜制作</div>
<div class="rd" style="left:336px;top:781px">v槽：45度，余厚0.4+/-0.1mm</div>
<div class="rd" style="left:336px;top:811px">阻焊型号：太阳，PSR2000 BL500</div>
<div class="rd" style="left:336px;top:841px">字符型号：高士，xz100</div>
<div style="left:336px;top:863px;width:300px;height:9px;overflow:hidden"><div class="rd" style="left:0;top:6px">文件：电金厚度</div></div>
<div style="left:0;top:872px;width:1440px;height:4px;background:#d8d6cc;border-top:1px solid #eee"></div>
<div style="left:151px;top:872px;width:1289px;height:4px;background:#d8d6cc"></div>

<!-- green annotation -->
<svg style="left:310px;top:430px" width="430" height="270" viewBox="310 430 430 270">
 <defs><filter id="sh" x="-5%" y="-5%" width="110%" height="110%"><feDropShadow dx="2" dy="2" stdDeviation="1.500" flood-color="#000" flood-opacity=".35"/></filter></defs>
 <g filter="url(#sh)">
 <rect x="320.500" y="638.500" width="407" height="48" fill="none" stroke="#33dd44" stroke-width="2.500"/>
 <path d="M639 668L692 470" stroke="#14e64a" stroke-width="5" fill="none"/>
 <path d="M702 441L704 472L688 470Z" fill="#14e64a"/>
 </g>
</svg>

<!-- IME bar -->
<div style="left:1292px;top:850px;width:148px;height:22px;background:#ecf6fc;border:1px solid #a8c4d8"></div>
<div style="left:1295px;top:852px;width:17px;height:17px;background:#e0481c;border-radius:3px;transform:rotate(-6deg);font:bold 15px/17px 'Liberation Sans',sans-serif;color:#fff;text-align:center">S</div>
<div style="left:1316px;top:851px;font:bold 15px/20px 'Noto Sans CJK SC',sans-serif;color:#4a8cc8">中</div>
<svg style="left:1336px;top:851px" width="100" height="20" fill="#4a8cc8">
 <path d="M10 3c5 5 2 13-7 12 5 4 13 0 13-7 0-3-3-5-6-5z"/>
 <circle cx="27" cy="6" r="2" fill="none" stroke="#4a8cc8"/><path d="M31 12l1 1-2 3" fill="none" stroke="#4a8cc8" stroke-width="1.500"/>
 <rect x="39" y="5" width="17" height="11" rx="1"/><path d="M41 8h13M41 11h13M44 14h8" stroke="#ecf6fc" stroke-dasharray="1.500 1"/>
 <circle cx="68.500" cy="6" r="3.500" fill="#a0a8b0"/><path d="M64 17c0-7 9-7 9 0z" fill="#a0a8b0"/>
 <path d="M83 17l7-8c-1-3 1-6 5-6l-2 3 2 2 3-2c0 4-3 6-6 5l-7 8z"/>
</svg>

</body></html>
